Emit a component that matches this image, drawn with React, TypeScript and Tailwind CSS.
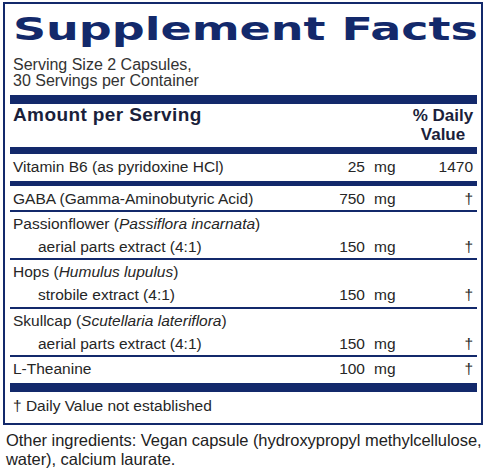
import React from 'react';

type Row = {
  name: React.ReactNode;
  sub?: string;
  amount: string;
  dv: string;
  pb?: string;
};

const Values: React.FC<{ amount: string; dv: string }> = ({ amount, dv }) => (
  <>
    <span className="w-[60px] text-right">{amount}</span>
    <span className="w-[48px] pl-[9px]">mg</span>
    <span className="w-[60px] text-right">{dv}</span>
  </>
);

const herbs: Row[] = [
  {
    name: (
      <>
        Passionflower (<i>Passiflora incarnata</i>)
      </>
    ),
    sub: 'aerial parts extract (4:1)',
    amount: '150',
    dv: '†',
    pb: 'pb-0',
  },
  {
    name: (
      <>
        Hops (<i>Humulus lupulus</i>)
      </>
    ),
    sub: 'strobile extract (4:1)',
    amount: '150',
    dv: '†',
    pb: 'pb-[1px]',
  },
  {
    name: (
      <>
        Skullcap (<i>Scutellaria lateriflora</i>)
      </>
    ),
    sub: 'aerial parts extract (4:1)',
    amount: '150',
    dv: '†',
    pb: 'pb-0',
  },
];

export default function App() {
  return (
    <div className="w-[488px] h-[471px] bg-white pl-[3px] pt-[2px] font-['Liberation_Sans',Arial,sans-serif] overflow-hidden">
      {/* label box */}
      <div className="w-[480px] border-2 border-[#13296b] pt-[9px] pl-[5px] pr-[4px]">
        <div className="pl-[3px] h-[32px] leading-[32px]">
          <h1 className="inline-block origin-left scale-x-[1.46] text-[31.5px] font-bold leading-[32px] text-[#13296b] font-['DejaVu_Sans',sans-serif] whitespace-nowrap">
            Supplement Facts
          </h1>
        </div>

        <div className="pl-[3px] mt-[12px] mb-[6px] text-[16px] leading-[16px] text-[#333]">
          <div>Serving Size 2 Capsules,</div>
          <div>30 Servings per Container</div>
        </div>

        <div className="h-[9px] bg-[#13296b]" />

        {/* header */}
        <div className="flex items-start justify-between pt-[2px] pb-[3px] pl-[3px] text-[#1b1f3b]">
          <div className="text-[19px] font-bold leading-[17px] tracking-[0.4px]">Amount per Serving</div>
          <div className="w-[64px] mr-[2px] text-center text-[17px] font-bold leading-[19px]">
            <div className="whitespace-nowrap">% Daily</div>
            <div>Value</div>
          </div>
        </div>

        <div className="h-[7px] bg-[#13296b]" />

        <div className="text-[15.5px] leading-[23px] text-[#262626]">
          <div className="flex pl-[3px] pr-[4px] pt-[1px] pb-[3px]">
            <span className="flex-1">Vitamin B6 (as pyridoxine HCl)</span>
            <Values amount="25" dv="1470" />
          </div>

          <div className="h-[5px] bg-[#13296b]" />

          <div className="flex pl-[3px] pr-[4px] pt-[1px]">
            <span className="flex-1">GABA (Gamma-Aminobutyric Acid)</span>
            <Values amount="750" dv="†" />
          </div>

          {herbs.map((h, i) => (
            <div key={i}>
              <div className="h-[2px] bg-[#13296b]" />
              <div className={`pl-[3px] pr-[4px] ${h.pb}`}>
                <div className="whitespace-nowrap">{h.name}</div>
                <div className="flex">
                  <span className="flex-1 pl-[25px]">{h.sub}</span>
                  <Values amount={h.amount} dv={h.dv} />
                </div>
              </div>
            </div>
          ))}

          <div className="h-[2px] bg-[#13296b]" />

          <div className="flex pl-[3px] pr-[4px] pb-[3px]">
            <span className="flex-1">L-Theanine</span>
            <Values amount="100" dv="†" />
          </div>

          <div className="h-[9px] bg-[#13296b]" />

          <div className="pl-[3px] pt-[2px] pb-[6px]">† Daily Value not established</div>
        </div>
      </div>

      <div className="mt-[6px] ml-[3px] text-[16.5px] leading-[18.5px] tracking-[-0.05px] text-[#222] whitespace-nowrap">
        <div>Other ingredients: Vegan capsule (hydroxypropyl methylcellulose,</div>
        <div>water), calcium laurate.</div>
      </div>
    </div>
  );
}
